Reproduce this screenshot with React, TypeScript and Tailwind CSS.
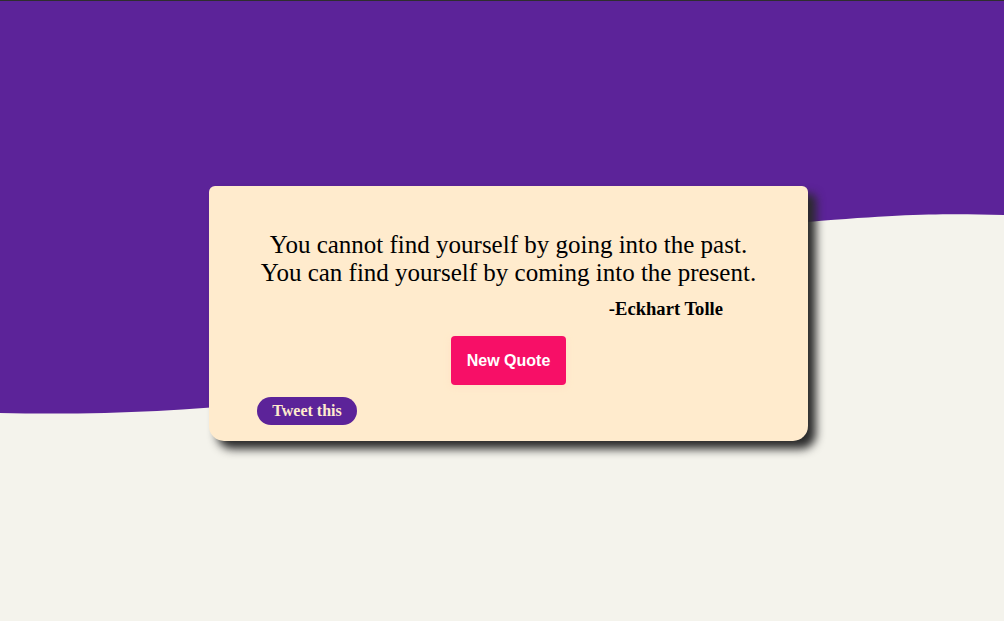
import React from "react";

export default function App() {
  return (
    <div className="relative w-full h-[621px] overflow-hidden bg-[#f4f3ec] border-t border-[#2e2e2e]">
      <svg
        className="absolute left-0 top-0"
        width="1004"
        height="621"
        viewBox="0 0 1004 621"
      >
        <path
          d="M0 412 C 100 414, 180 410, 260 402 S 700 230, 808 221 S 950 213, 1004 214 L1004 0 L0 0 Z"
          fill="#5c2399"
        />
      </svg>
      <div className="relative flex justify-center pl-[13px] pt-[185px]">
        <div
          className="w-[599px] h-[255px] bg-[#ffebcd] rounded-t-[6px] rounded-b-[15px] shadow-[8px_8px_10px_#2a2a2a] flex flex-col"
        >
          <p
            className="mt-[45px] text-center text-[25px] leading-[28px] text-black"
            style={{ fontFamily: '"Liberation Serif", serif' }}
          >
            You cannot find yourself by going into the past.
            <br />
            You can find yourself by coming into the present.
          </p>
          <div
            className="mt-[11px] pr-[85px] text-right text-[18.6px] leading-[22px] font-bold text-black"
            style={{ fontFamily: '"Liberation Serif", serif' }}
          >
            -Eckhart Tolle
          </div>
          <div className="mt-[16px] flex justify-center">
            <button
              className="w-[115px] h-[49px] rounded-[4px] bg-[#f70f67] text-white font-bold text-[16px] shadow-[0_2px_6px_rgba(255,220,190,0.6)]"
              style={{ fontFamily: '"Liberation Sans", Arial, sans-serif' }}
            >
              New Quote
            </button>
          </div>
          <div className="mt-[12px] pl-[48px]">
            <button
              className="w-[100px] h-[28px] rounded-full bg-[#5c2399] text-[#ffebcd] font-bold text-[16px]"
              style={{ fontFamily: '"Liberation Serif", serif' }}
            >
              Tweet this
            </button>
          </div>
        </div>
      </div>
    </div>
  );
}
